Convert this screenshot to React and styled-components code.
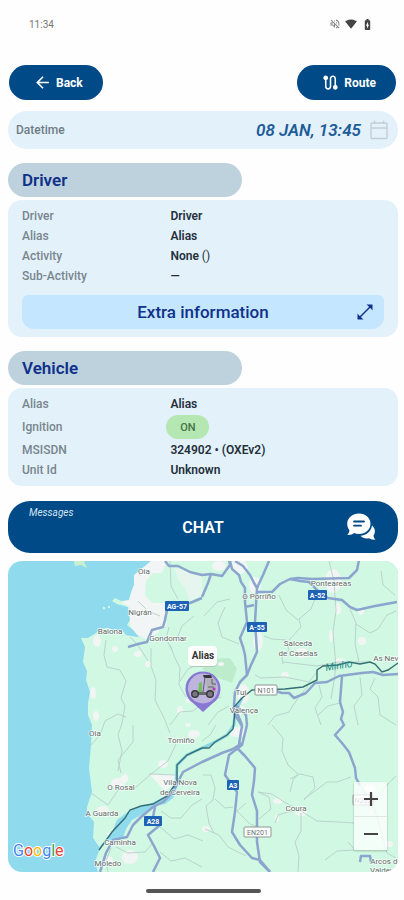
import React from "react";
import styled, { createGlobalStyle } from "styled-components";
import {
  MdArrowBack,
  MdRoute,
  MdSignalWifi4Bar,
  MdBatteryChargingFull,
  MdOutlineVolumeOff
} from "react-icons/md";

const GlobalStyle = createGlobalStyle`
  body {
    margin: 0;
    background: #fefefe;
    font-family: Roboto, "Liberation Sans", sans-serif;
  }

  *, *::before, *::after {
    box-sizing: border-box;
  }

  button {
    border: 0;
    margin: 0;
    padding: 0;
    font: inherit;
    color: inherit;
    background: none;
    cursor: pointer;
  }
`;

const Screen = styled.div`
  display: flex;
  flex-direction: column;
  padding: 0 6px 0 8px;
`;

const StatusBar = styled.header`
  display: flex;
  align-items: center;
  justify-content: space-between;
  height: 48px;
  padding: 0 24px 0 21px;
  font-size: 10px;
  color: #777;
`;

const StatusIcons = styled.div`
  display: flex;
  align-items: center;
  gap: 4px;
  color: #444;
`;

const MutedIcon = styled(MdOutlineVolumeOff)`
  color: #888;
`;

const Toolbar = styled.nav`
  display: flex;
  justify-content: space-between;
  margin-top: 17px;
  padding: 0 2px 0 1px;
`;

const PillButton = styled.button`
  display: flex;
  align-items: center;
  justify-content: center;
  gap: 4px;
  height: 35px;
  padding: 0 20px 0 24px;
  border-radius: 18px;
  background: #004a87;
  color: #fff;
  font-size: 12px;
  font-weight: 700;
`;

const DateRow = styled.div`
  display: flex;
  align-items: center;
  gap: 8px;
  height: 38px;
  margin-top: 11px;
  padding: 0 9px 0 8px;
  border-radius: 19px;
  background: #e3f1fb;
`;

const DateLabel = styled.span`
  flex: 1;
  font-size: 12px;
  font-weight: 500;
  color: #6f7c84;
`;

const DateValue = styled.time`
  font-size: 17px;
  font-weight: 600;
  font-style: italic;
  color: #205c98;
`;

const IconButton = styled.button`
  display: flex;
  color: #c3cdd3;
`;

const Section = styled.section`
  display: flex;
  flex-direction: column;
  gap: 3px;
  margin-top: 14px;
`;

const SectionTitle = styled.h2`
  width: 60%;
  margin: 0;
  padding: 0 14px;
  border-radius: 17px;
  background: #bed2dd;
  color: #10318a;
  font-size: 17px;
  font-weight: 600;
  line-height: 34px;
`;

const Card = styled.div`
  padding: 6px 14px;
  border-radius: 14px;
  background: #e3f1fb;
`;

const Fields = styled.dl`
  margin: 0;
`;

const Field = styled.div`
  display: grid;
  grid-template-columns: 41% 1fr;
  align-items: center;
  min-height: ${props => (props.$tall ? 26 : 20)}px;
  font-size: 12px;
`;

const Term = styled.dt`
  font-weight: 500;
  color: #78858d;
`;

const Value = styled.dd`
  margin: 0;
  font-weight: 600;
  color: #243039;
`;

const Light = styled.span`
  font-weight: 400;
`;

const Badge = styled.span`
  display: flex;
  align-items: center;
  justify-content: center;
  width: 43px;
  height: 24px;
  margin-left: -4px;
  border-radius: 12px;
  background: #b5e7b2;
  color: #467548;
  font-size: 11px;
  font-weight: 500;
`;

const ExtraButton = styled.button`
  display: grid;
  grid-template-columns: 20px 1fr 20px;
  align-items: center;
  width: 100%;
  height: 34px;
  margin: 9px 0 2px;
  padding: 0 8px;
  border-radius: 6px 6px 12px 12px;
  background: #c4e7ff;
  color: #10318a;
  font-size: 17px;
  font-weight: 500;
`;

const ExtraLabel = styled.span`
  grid-column: 2;
`;

const ChatButton = styled.button`
  display: grid;
  grid-template-columns: 1fr auto 1fr;
  height: 52px;
  margin-top: 15px;
  padding: 0 21px;
  border-radius: 22px;
  background: #004a87;
  color: #fff;
`;

const ChatHint = styled.span`
  justify-self: start;
  padding-top: 6px;
  font-size: 10px;
  font-style: italic;
  color: #d3e3f1;
`;

const ChatLabel = styled.span`
  align-self: center;
  font-size: 16px;
  font-weight: 600;
`;

const ChatIconSlot = styled.span`
  display: flex;
  align-self: center;
  justify-self: end;
`;

const MapFrame = styled.div`
  position: relative;
  margin-top: 8px;
  border-radius: 14px;
  overflow: hidden;
`;

const MapSvg = styled.svg`
  display: block;
  width: 100%;
  height: auto;
`;

const ZoomControls = styled.div`
  position: absolute;
  right: 11px;
  bottom: 22px;
  display: flex;
  flex-direction: column;
  width: 33px;
  background: rgba(255, 255, 255, 0.76);
  box-shadow: 0 1px 2px rgba(0, 0, 0, 0.25);
`;

const ZoomButton = styled.button`
  display: flex;
  align-items: center;
  justify-content: center;
  height: 34px;
  color: #444;

  & + & {
    border-top: 1px solid #dfe7e4;
  }
`;

const HomeIndicator = styled.div`
  align-self: center;
  width: 115px;
  height: 4px;
  margin: 17px 0 6px;
  border-radius: 2px;
  background: #555;
`;

const driver = [
  { name: "Driver", value: "Driver" },
  { name: "Alias", value: "Alias" },
  { name: "Activity", value: <>None <Light>()</Light></> },
  { name: "Sub-Activity", value: "—" }
];

const vehicle = [
  { name: "Alias", value: "Alias" },
  { name: "Ignition", value: <Badge>ON</Badge>, tall: true },
  { name: "MSISDN", value: "324902 • (OXEv2)" },
  { name: "Unit Id", value: "Unknown" }
];

const highways = [
  "M157 0L161 5L170 5L182 11L194 14L203 13L214 15L222 4L221 -1",
  "M222 0L224 8L231 14L233 21L237 27V41L239 61L232 77L235 86L237 94L239 114L232 121L227 131L226 144L234 164",
  "M227 0L235 5L242 14L246 22L249 27L247 61L249 91L243 104L239 114",
  "M261 0L255 14L249 27",
  "M237 46L246 44",
  "M249 31L264 31L272 23L282 18L292 20L301 21L311 31L320 37L334 39L342 46L349 49L367 45L389 41",
  "M282 18L290 17L304 18L341 17L349 9L351 -1",
  "M390 113L375 114L365 111L354 112L331 115L319 121L307 122L298 132L286 137L281 132L274 132L262 128L247 129",
  "M334 115L332 141L335 151L333 158L336 164L327 174L334 182L341 191L347 207L348 217L352 224",
  "M239 164L234 184L221 194L217 214L229 231L227 251L224 271L232 284L244 297L252 299L262 311",
  "M229 187L237 195L247 207L246 220L244 234L249 250L249 281L252 301L262 311",
  "M239 164L238 154L229 145L226 152L234 165L231 183",
  "M234 182L225 188L214 192L194 201L175 211L165 231L155 241L145 246L133 256L125 264L119 276L105 279L98 292L92 311",
  "M147 246L145 256L152 264L140 274L146 285L152 297L145 311",
  "M194 37L182 42L168 43L159 49L157 59L155 66L144 69L139 81L130 83L120 86",
  "M194 36L200 22L203 13",
  "M352 301L353 295H362L363 301"
];

const lanes = [
  "M98 79L96 94L99 106L112 109L118 120L113 137L117 145L114 162L110 174L114 190L110 210",
  "M143 87L143 105L148 119L147 139L156 157L162 172",
  "M122 76L130 84L140 100",
  "M162 84L167 97L172 107L171 124L178 136",
  "M172 120L180 108L188 104L193 96",
  "M161 66L158 78L164 89",
  "M162 0L163 25L170 38",
  "M130 40L140 50L152 55",
  "M168 80L174 65L186 55",
  "M83 184L92 174L97 160L110 153L118 156",
  "M125 164L125 181L110 199L113 212",
  "M83 232L100 244L110 229L128 226L142 214L160 200L168 183",
  "M141 213L167 214",
  "M162 164L172 151L185 150L198 140L213 136",
  "M200 164L210 151L221 145",
  "M217 46L210 62L214 76L231 83",
  "M196 55L209 41L222 38",
  "M256 75L264 78L278 79L281 89L274 96L275 103",
  "M281 79L293 66L291 58L303 48L307 38",
  "M275 101L309 105L330 101L362 101",
  "M247 114L253 117L277 116L301 121L311 108",
  "M321 0L326 20L328 50L325 71L328 105L326 120L323 138",
  "M342 48L348 62L347 83L351 101",
  "M348 63L362 72L370 68L379 54L388 50",
  "M373 10L375 24L387 34",
  "M271 34L278 49L290 59",
  "M300 125L290 137L281 151L267 155L260 164",
  "M311 124L314 136L307 147L313 164",
  "M352 116L354 134L346 145L350 164",
  "M367 117L362 128L370 136L372 154L388 164",
  "M332 142L320 145L310 154",
  "M264 164L275 177L274 190L280 204L290 213L285 219L282 231",
  "M282 218L292 213L305 216L307 227L296 239",
  "M296 238L307 230L319 221L329 221L343 216",
  "M250 231L264 233L276 241L293 250L309 260L330 261L347 262",
  "M267 262L270 254L280 251L290 249",
  "M293 252L293 270L287 281L291 295L290 311",
  "M250 231L261 236L263 248L251 258",
  "M238 242L229 250L242 263L248 265",
  "M208 164L202 174L194 180",
  "M195 214L203 214L207 227L205 239L198 245L201 262L206 272",
  "M207 238L217 247L225 246",
  "M153 250L163 257L173 257L184 244L194 238",
  "M152 266L166 278L180 274L195 280",
  "M152 291L163 300L177 297L194 306",
  "M108 286L120 292L137 291L144 283",
  "M103 287L98 300L100 311",
  "M197 268L211 274L220 286L238 295",
  "M317 299L329 290L347 289L340 281",
  "M363 244L379 224L388 215",
  "M348 221L358 232L366 247L372 266L379 292L388 297"
];

// [x, y, rx, ry]
const towns = [
  [142, 50, 10, 8], [129, 60, 7, 7], [151, 62, 8, 6],
  [231, 6, 9, 7], [247, 24, 6, 8], [250, 80, 5, 10], [211, 5, 7, 5],
  [325, 20, 8, 12], [294, 92, 7, 5], [330, 48, 3, 6], [235, 133, 6, 10],
  [230, 149, 7, 5], [229, 171, 9, 5], [186, 173, 6, 4], [155, 203, 5, 4],
  [110, 222, 7, 5], [160, 220, 8, 5], [107, 274, 8, 4], [122, 296, 8, 7],
  [95, 249, 6, 4], [89, 80, 4, 6], [107, 88, 3, 3], [130, 93, 4, 3],
  [140, 103, 3, 3], [85, 132, 3, 6], [88, 155, 3, 5], [270, 240, 5, 3],
  [293, 252, 6, 3], [198, 268, 4, 3], [269, 257, 2, 4], [323, 75, 2, 6],
  [353, 50, 3, 4], [277, 114, 4, 3], [332, 100, 5, 3], [180, 140, 3, 2],
  [381, 283, 4, 3], [100, 299, 5, 4], [180, 164, 3, 2], [354, 80, 4, 4],
  [213, 103, 3, 2], [362, 228, 6, 5], [172, 149, 3, 4]
];

const labels = [
  { x: 136, y: 13, text: "Oia" },
  { x: 132, y: 54, text: "Nigrán" },
  { x: 102, y: 73, text: "Baiona" },
  { x: 160, y: 80, text: "Gondomar" },
  { x: 251, y: 38, text: "O Porriño" },
  { x: 323, y: 25, text: "Ponteareas" },
  { x: 290, y: 85, text: "Salceda" },
  { x: 290, y: 95, text: "de Caselas" },
  { x: 382, y: 100, text: "As Neves" },
  { x: 233, y: 134, text: "Tui" },
  { x: 236, y: 152, text: "Valença" },
  { x: 173, y: 182, text: "Tomiño" },
  { x: 87, y: 175, text: "Oia" },
  { x: 172, y: 224, text: "Vila Nova" },
  { x: 172, y: 234, text: "de Cerveira" },
  { x: 113, y: 229, text: "O Rosal" },
  { x: 94, y: 255, text: "A Guarda" },
  { x: 112, y: 284, text: "Caminha" },
  { x: 100, y: 305, text: "Moledo" },
  { x: 288, y: 250, text: "Coura" },
  { x: 378, y: 303, text: "Arcos de" },
  { x: 378, y: 312, text: "Valdevez" }
];

const shields = [
  { x: 157, y: 40, w: 24, text: "AG-57" },
  { x: 300, y: 29, w: 19, text: "A-52" },
  { x: 239, y: 61, w: 20, text: "A-55" },
  { x: 219, y: 219, w: 12, text: "A3" },
  { x: 136, y: 255, w: 18, text: "A28" },
  { x: 247, y: 124, w: 22, text: "N101", plain: true },
  { x: 236, y: 266, w: 27, text: "EN201", plain: true },
  { x: 345, y: 234, w: 20, text: "N202", plain: true }
];

const google = [
  ["G", "#4285f4"],
  ["o", "#ea4335"],
  ["o", "#fbbc05"],
  ["g", "#4285f4"],
  ["l", "#34a853"],
  ["e", "#ea4335"]
];

function CalendarIcon() {
  return (
    <svg width="20" height="20" viewBox="0 0 20 20" fill="none" stroke="currentColor" strokeWidth="1.4" aria-hidden="true">
      <rect x="2" y="3" width="16" height="15.5" rx="1" />
      <path d="M2 8H18M5.500 .8V4M14.500 .8V4" />
    </svg>
  );
}

function ExpandIcon() {
  return (
    <svg width="18" height="18" viewBox="0 0 18 18" aria-hidden="true">
      <path d="M4 14L14 4" stroke="currentColor" strokeWidth="1.4" />
      <path d="M10.5 1.5H16.5V7.5L14.8 5.6L12.4 3.2ZM1.5 10.5V16.5H7.5L5.6 14.8L3.2 12.4Z" fill="currentColor" />
    </svg>
  );
}

function ChatIcon() {
  return (
    <svg width="32" height="30" viewBox="0 0 32 30" aria-hidden="true">
      <path
        d="M27 13.5C30 16 31 20 28.500 23.500C28.300 25 29.500 26.500 30.500 27.500C28 28 25.500 27.300 24 26.200C20.500 27 17.500 26 15.500 23.700C21.500 23.500 26 19.500 27 13.500Z"
        fill="#fff"
      />
      <path
        d="M14 1.500C20.500 1.500 25.500 6 25.500 11.700C25.500 17.500 20.500 22 14 22C12.200 22 10.600 21.700 9.200 21.100C7.500 22.500 5 23.300 2.300 23C3.500 21.500 4.300 20 4.400 18C3 16.300 2.200 14.100 2.200 11.700C2.200 6 7.500 1.500 14 1.500Z"
        fill="#fff"
      />
      <path d="M9 9.500H19M9 13.700H16" stroke="#004a87" strokeWidth="1.8" strokeLinecap="round" />
    </svg>
  );
}

function Shield({ x, y, w, text, plain }) {
  return (
    <g>
      <rect
        x={x}
        y={y}
        width={w}
        height="10"
        rx="1"
        fill={plain ? "#fbfdfc" : "#1d62b5"}
        stroke={plain ? "#8d9795" : "none"}
      />
      <text
        x={x + w / 2}
        y={y + 8}
        textAnchor="middle"
        fontSize="7"
        fontWeight={plain ? 400 : 700}
        fill={plain ? "#6c7472" : "#fff"}
      >
        {text}
      </text>
    </g>
  );
}

function VehiclePin() {
  return (
    <g>
      <path
        d="M195 151L185 142C180.500 139 177.500 134 177.500 127.500C177.500 118 185.300 110.500 195 110.500C204.700 110.500 212.500 118 212.500 127.500C212.500 134 209.500 139 205 142Z"
        fill="#8878d4"
      />
      <circle cx="195" cy="127.500" r="15" fill="#bdb5dd" />
      <path d="M197 116H205L208 122V132H200Z" fill="#b3b0bd" />
      <path d="M195 114H203L204 117H196Z" fill="#35363c" />
      <path d="M197 116L195 131M204 118V123H208M200 126H206" fill="none" stroke="#5d5e66" strokeWidth="1" />
      <path d="M191 122L194 121V133H190Z" fill="#73c15e" />
      <path d="M184 131H206V134H184Z" fill="#68696e" />
      <circle cx="187" cy="133" r="3.300" fill="#77787d" stroke="#38393f" strokeWidth="1.400" />
      <circle cx="202" cy="133" r="3.300" fill="#77787d" stroke="#38393f" strokeWidth="1.400" />
      <circle cx="206" cy="128" r="1.600" fill="#b43ab9" />
    </g>
  );
}

function VehicleMap() {
  return (
    <MapSvg viewBox="0 0 390 311" role="img" aria-label="Vehicle location">
      <rect width="390" height="311" fill="#90daee" />
      <path
        d="M143 0L134 9L127 14L126 24L123 31L121 39L113 40L107 37L104 40L109 43L120 46L121 54L122 59L119 64L125 69L135 74L129 76L118 74L114 69L108 70L100 67L91 68L88 72L80 77L73 77L77 86L75 101L79 110L78 119L82 131L80 142L80 154L84 164L83 184L81 207L84 231L79 246L79 252L86 261L85 277L92 287L87 301L90 311H390V0Z"
        fill="#d0f8e2"
      />
      <path
        d="M143 0H159L154 12L145 12L138 20L137 34L144 42L157 42L158 54L150 62L151 71L138 78L129 74L122 64L122 47L113 41L121 39L126 24V14Z"
        fill="#f1f5f5"
      />
      <path d="M166 6L182 12L194 16V34L182 40L176 26L170 18Z" fill="#e6f5ee" />
      <path d="M66 0H76L79 7L73 4L67 5Z" fill="#c7f0ce" />
      <path d="M95 46h2v2h-2zM100 45h2v2h-2z" fill="#d0f8e2" />
      <path d="M194 108L206 98L222 97L229 108L224 122L208 116Z" fill="#bdeccd" />
      <path d="M106 222L118 212L121 218L112 228ZM141 213L167 214L168 222L157 230Z" fill="#f1f7f5" />
      {towns.map(([x, y, rx, ry]) => (
        <ellipse key={`${x}-${y}`} cx={x} cy={y} rx={rx} ry={ry} fill="#f1f5f4" />
      ))}
      <path
        d="M90 288L104 271L109 259L122 249L142 243L159 234L169 220L170 224L165 237L157 243L146 245L135 253L124 259L118 268L115 277L100 280Z"
        fill="#90daee"
      />
      <g fill="none" stroke="#b8cfcb" strokeWidth="0.900" strokeLinejoin="round">
        {lanes.map(d => (
          <path key={d} d={d} />
        ))}
      </g>
      <path
        d="M146 245L160 236L168 222L169 204L179 194L194 187L207 181L219 174L226 164L227 151L234 137"
        fill="none"
        stroke="#89d5e5"
        strokeWidth="3"
      />
      <g fill="none" stroke="#8ba5ce" strokeWidth="2.500" strokeLinejoin="round">
        {highways.map(d => (
          <path key={d} d={d} />
        ))}
      </g>
      <path
        d="M91 289L104 271L117 257L122 249L133 245L145 243L159 235L169 221L169 204L179 194L194 187L201 187L207 181L219 174L225 168L227 151L225 147L234 137L244 129L277 128L295 126L309 119L309 109L315 105L330 104L341 101L352 103L362 101L367 103L374 111L380 109L390 102"
        fill="none"
        stroke="#356e73"
        strokeWidth="1.400"
      />
      {shields.map(shield => (
        <Shield key={shield.text} {...shield} />
      ))}
      <g
        fontSize="8"
        textAnchor="middle"
        fill="#5f6a67"
        stroke="#fff"
        strokeWidth="1.600"
        strokeOpacity="0.800"
        paintOrder="stroke"
      >
        {labels.map(({ x, y, text }) => (
          <text key={`${text}-${y}`} x={x} y={y}>
            {text}
          </text>
        ))}
      </g>
      <text x="318" y="110" fontSize="10" fontStyle="italic" fill="#238a87" transform="rotate(-9 318 110)">
        Minho
      </text>
      <VehiclePin />
      <rect x="181" y="86" width="28" height="20" rx="4" fill="#aec8bc" />
      <rect x="180" y="85" width="29" height="20" rx="4" fill="#fff" />
      <text x="195" y="98" fontSize="10" fontWeight="700" textAnchor="middle" fill="#333">
        Alias
      </text>
      <text x="5" y="295" fontSize="16" stroke="#fff" strokeWidth="2" paintOrder="stroke">
        {google.map(([letter, color], i) => (
          <tspan key={i} fill={color}>
            {letter}
          </tspan>
        ))}
      </text>
    </MapSvg>
  );
}

function FieldList({ items }) {
  return (
    <Fields>
      {items.map(({ name, value, tall }) => (
        <Field key={name} $tall={tall}>
          <Term>{name}</Term>
          <Value>{value}</Value>
        </Field>
      ))}
    </Fields>
  );
}

function App() {
  return (
    <>
      <GlobalStyle />
      <Screen>
        <StatusBar>
          <span>11:34</span>
          <StatusIcons>
            <MutedIcon size={12} />
            <MdSignalWifi4Bar size={12} />
            <MdBatteryChargingFull size={13} />
          </StatusIcons>
        </StatusBar>
        <Toolbar>
          <PillButton type="button">
            <MdArrowBack size={19} />
            Back
          </PillButton>
          <PillButton type="button">
            <MdRoute size={19} />
            Route
          </PillButton>
        </Toolbar>
        <DateRow>
          <DateLabel>Datetime</DateLabel>
          <DateValue>08 JAN, 13:45</DateValue>
          <IconButton type="button" aria-label="Pick a date">
            <CalendarIcon />
          </IconButton>
        </DateRow>
        <Section>
          <SectionTitle>Driver</SectionTitle>
          <Card>
            <FieldList items={driver} />
            <ExtraButton type="button">
              <ExtraLabel>Extra information</ExtraLabel>
              <ExpandIcon />
            </ExtraButton>
          </Card>
        </Section>
        <Section>
          <SectionTitle>Vehicle</SectionTitle>
          <Card>
            <FieldList items={vehicle} />
          </Card>
        </Section>
        <ChatButton type="button">
          <ChatHint>Messages</ChatHint>
          <ChatLabel>CHAT</ChatLabel>
          <ChatIconSlot>
            <ChatIcon />
          </ChatIconSlot>
        </ChatButton>
        <MapFrame>
          <VehicleMap />
          <ZoomControls>
            <ZoomButton type="button" aria-label="Zoom in">
              <svg width="16" height="16" viewBox="0 0 16 16" stroke="currentColor" strokeWidth="2.200">
                <path d="M1 8H15M8 1V15" />
              </svg>
            </ZoomButton>
            <ZoomButton type="button" aria-label="Zoom out">
              <svg width="16" height="16" viewBox="0 0 16 16" stroke="currentColor" strokeWidth="2.200">
                <path d="M1 8H15" />
              </svg>
            </ZoomButton>
          </ZoomControls>
        </MapFrame>
        <HomeIndicator />
      </Screen>
    </>
  );
}

export default App;
